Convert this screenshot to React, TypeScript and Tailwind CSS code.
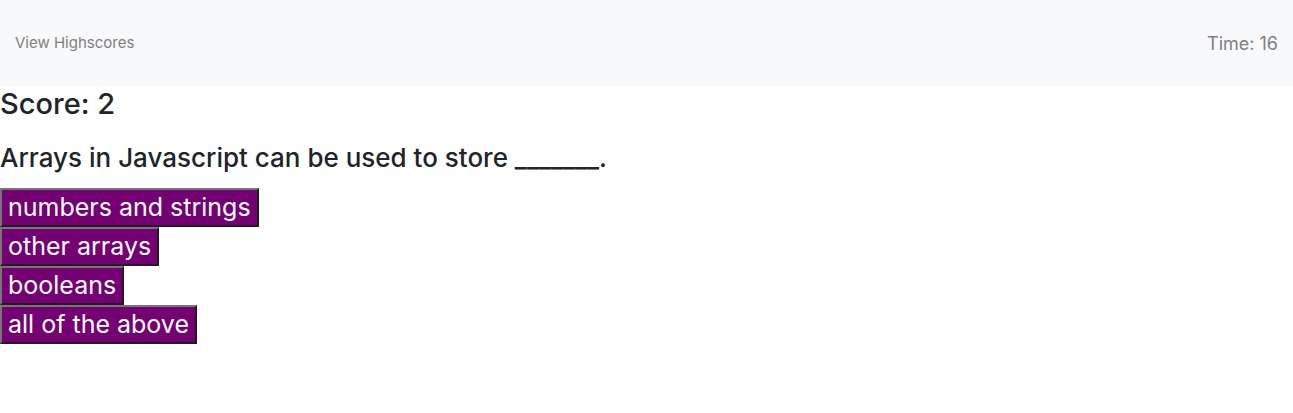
const answers = ['numbers and strings', 'other arrays', 'booleans', 'all of the above'];

export default function App() {
  return (
    <div className="min-h-[413px] bg-white text-[#212529]" style={{ fontFamily: 'Inter, "Noto Sans", sans-serif' }}>
      {/* Navbar */}
      <nav className="flex h-[87px] items-center justify-between bg-[#f8f9fa] px-[15px]">
        <a className="text-[15px] text-[#808080]">View Highscores</a>
        <span className="text-[18px] text-[#808080]">Time: 16</span>
      </nav>

      <h3 className="text-[29px] font-medium leading-[34px]">Score: 2</h3>
      <h4 className="mt-[21px] mb-[15px] text-[26px] font-medium leading-[31px]">
        Arrays in Javascript can be used to store _______.
      </h4>

      <div className="flex flex-col items-start">
        {answers.map((a) => (
          <button
            key={a}
            className="border-2 border-t-[#767676] border-l-[#767676] border-r-[#1e1e1e] border-b-[#1e1e1e] bg-[#740074] px-[6px] py-0 text-[25px] leading-[35px] text-white"
          >
            {a}
          </button>
        ))}
      </div>
    </div>
  );
}
